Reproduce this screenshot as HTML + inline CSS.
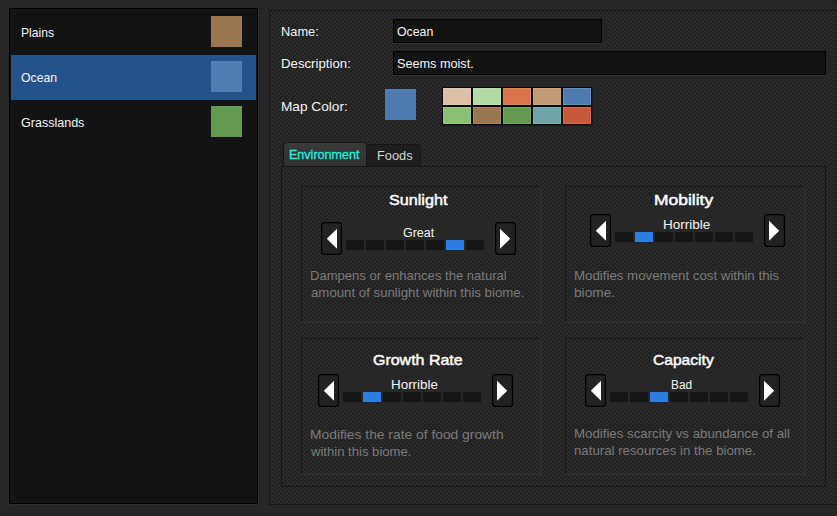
<!DOCTYPE html>
<html>
<head>
<meta charset="utf-8">
<title>Biome Editor</title>
<style>
html,body{margin:0;padding:0;}
html{background:#242424;overflow:hidden;}
body{width:837px;height:516px;overflow:hidden;position:relative;background:#242424;font-family:"Liberation Sans",sans-serif;font-size:13.33px;color:#f4f4f4;}
#bg{position:absolute;left:0;top:0;width:837px;height:516px;}
.abs{position:absolute;}
.t{position:absolute;white-space:nowrap;line-height:16px;height:16px;transform-origin:0 50%;}
.t12{font-size:12px;}
.h{position:absolute;white-space:nowrap;font-weight:normal;-webkit-text-stroke:0.5px #fafafa;font-size:15px;line-height:20px;height:20px;transform-origin:0 50%;color:#fafafa;}
.d{position:absolute;white-space:nowrap;line-height:16px;height:16px;transform-origin:0 50%;color:#7a7a7a;}
/* left list */
#list{left:9px;top:8px;width:247px;height:494px;border:1px solid #000;background:#131313;box-shadow:1px 1px 0 0 #2e2e2e;}
.row{position:absolute;left:11px;width:245px;height:45px;}
.sw{position:absolute;left:211px;width:31px;height:31px;}
/* right panel */
#panel{left:269px;top:10px;width:600px;height:493px;border:1px solid #151515;}
.inp{position:absolute;height:22px;border:1px solid #000;background:#131313;box-shadow:0 1px 0 0 #303030;}
#pal{left:442px;top:87px;width:150px;height:38px;background:#0b0b0a;border-right:1px solid #1b1b1b;border-bottom:1px solid #1b1b1b;}
.c{position:absolute;width:28px;height:17px;box-shadow:inset 0 0 0 1px rgba(255,255,255,0.13);}
/* tabs */
#tab1{left:283px;top:142px;width:82px;height:23px;border:1px solid #151515;border-bottom:none;border-radius:5px 5px 0 0;background:linear-gradient(#3a3a3a,#2f2f2f);}
#tab2{left:366px;top:144px;width:53px;height:21px;border:1px solid #151515;border-bottom:none;border-radius:5px 5px 0 0;background:#1d1d1d;}
#tabc{left:281px;top:166px;width:543px;height:319px;border:1px solid #151515;}
.g{position:absolute;width:238px;height:135px;border:1px solid;border-color:#171717 #303030 #303030 #171717;}
.bar{position:absolute;width:149px;height:35px;background:#272727;}
.s{position:absolute;top:19px;width:18px;height:10px;background:#161616;}
.s.on{background:#2e7de0;}
.btn{position:absolute;width:21px;height:33px;}
</style>
</head>
<body>
<svg id="bg" width="837" height="516" shape-rendering="crispEdges">
<defs>
<pattern id="tx" x="0" y="0" width="4" height="4" patternUnits="userSpaceOnUse">
<g id="txg">
<rect x="0" y="0" width="4" height="4" fill="#242424"/>
<rect x="1" y="1" width="2" height="1" fill="#2f2f2f"/>
<rect x="3" y="1" width="1" height="1" fill="#202020"/>
<rect x="0" y="1" width="1" height="1" fill="#202020"/>
<rect x="1" y="3" width="2" height="1" fill="#202020"/>
<rect x="3" y="3" width="1" height="1" fill="#2f2f2f"/>
<rect x="0" y="3" width="1" height="1" fill="#2f2f2f"/>
</g>
</pattern>
<pattern id="tx2" x="1" y="0" width="4" height="4" patternUnits="userSpaceOnUse"><rect x="0" y="0" width="4" height="4" fill="#242424"/><rect x="1" y="1" width="2" height="1" fill="#2f2f2f"/><rect x="3" y="1" width="1" height="1" fill="#202020"/><rect x="0" y="1" width="1" height="1" fill="#202020"/><rect x="1" y="3" width="2" height="1" fill="#202020"/><rect x="3" y="3" width="1" height="1" fill="#2f2f2f"/><rect x="0" y="3" width="1" height="1" fill="#2f2f2f"/></pattern>
</defs>
<rect x="0" y="0" width="837" height="516" fill="url(#tx)"/>
<rect x="270" y="11" width="567" height="493" fill="url(#tx2)"/>
</svg>

<!-- left list -->
<div id="list" class="abs"></div>
<div class="row" style="top:55px;background:#24538c;"></div>
<div class="sw" style="top:16px;background:#9b7650;"></div>
<div class="sw" style="top:61px;background:#527fb3;"></div>
<div class="sw" style="top:106px;background:#629a50;"></div>
<span class="t" id="l1" style="left:21.1px;top:25px;transform:scaleX(0.91);">Plains</span>
<span class="t" id="l2" style="left:21.2px;top:70px;transform:scaleX(0.918);">Ocean</span>
<span class="t" id="l3" style="left:21.2px;top:115px;transform:scaleX(0.94);">Grasslands</span>

<!-- right panel -->
<div id="panel" class="abs"></div>
<span class="t" id="n1" style="left:281.1px;top:24px;transform:scaleX(0.962);">Name:</span>
<span class="t" id="n2" style="left:281.1px;top:56px;transform:scaleX(0.992);">Description:</span>
<span class="t" id="n3" style="left:281.4px;top:99px;transform:scaleX(1.024);">Map Color:</span>
<div class="inp" style="left:393px;top:19px;width:207px;"></div>
<div class="inp" style="left:393px;top:51px;width:431px;"></div>
<span class="t" id="i1" style="left:397.3px;top:24px;transform:scaleX(0.923);">Ocean</span>
<span class="t" id="i2" style="left:396.5px;top:56px;transform:scaleX(0.95);">Seems moist.</span>
<div class="abs" style="left:385px;top:89px;width:31px;height:31px;background:#4f7cb0;"></div>
<div id="pal" class="abs">
<div class="c" style="left:1px;top:1px;background:#dcc0a5;"></div>
<div class="c" style="left:31px;top:1px;background:#b3daa6;"></div>
<div class="c" style="left:61px;top:1px;background:#d9744a;"></div>
<div class="c" style="left:91px;top:1px;background:#c49a75;"></div>
<div class="c" style="left:121px;top:1px;background:#4f7cb0;"></div>
<div class="c" style="left:1px;top:20px;background:#8ac074;"></div>
<div class="c" style="left:31px;top:20px;background:#9b7650;"></div>
<div class="c" style="left:61px;top:20px;background:#629a50;"></div>
<div class="c" style="left:91px;top:20px;background:#6fa5a8;"></div>
<div class="c" style="left:121px;top:20px;background:#c9583b;"></div>
</div>

<!-- tabs -->
<div id="tabc" class="abs"></div>
<div id="tab1" class="abs"></div>
<div id="tab2" class="abs"></div>
<span class="t" id="tb1" style="left:289.3px;top:147px;color:#1ff0e0;-webkit-text-stroke:0.3px #1ff0e0;transform:scaleX(0.941);">Environment</span>
<span class="t" id="tb2" style="left:376.5px;top:148px;color:#d6d6d6;transform:scaleX(0.959);">Foods</span>

<!-- groups -->
<div class="g" style="left:301px;top:186px;"></div>
<div class="g" style="left:565px;top:186px;"></div>
<div class="g" style="left:301px;top:338px;"></div>
<div class="g" style="left:565px;top:338px;"></div>

<!-- Sunlight -->
<span class="h" id="h1" style="left:389.1px;top:190px;transform:scaleX(1.078);">Sunlight</span>
<div class="bar" style="left:342px;top:221px;">
<div class="s" style="left:4px"></div><div class="s" style="left:24px"></div><div class="s" style="left:44px"></div><div class="s" style="left:64px"></div><div class="s" style="left:84px"></div><div class="s on" style="left:104px"></div><div class="s" style="left:124px"></div>
</div>
<span class="t t12" id="v1" style="left:402.9px;top:225px;transform:scaleX(1.037);">Great</span>
<svg class="btn" style="left:321px;top:222px;" width="21" height="33"><rect x="0.6" y="0.6" width="19.8" height="31.8" rx="2.6" fill="#222222" stroke="#020202" stroke-width="1.2"/><path d="M5.8 16.8 L16 6.8 L16 26.8 Z" fill="#fff"/></svg>
<svg class="btn" style="left:495px;top:222px;" width="21" height="33"><rect x="0.6" y="0.6" width="19.8" height="31.8" rx="2.6" fill="#222222" stroke="#020202" stroke-width="1.2"/><path d="M15.2 16.8 L5 6.8 L5 26.8 Z" fill="#fff"/></svg>
<span class="d" id="d1a" style="left:309.6px;top:268px;transform:scaleX(0.98);">Dampens or enhances the natural</span>
<span class="d" id="d1b" style="left:310.6px;top:285px;transform:scaleX(0.993);">amount of sunlight within this biome.</span>

<!-- Mobility -->
<span class="h" id="h2" style="left:654.2px;top:190px;transform:scaleX(1.163);">Mobility</span>
<div class="bar" style="left:611px;top:213px;">
<div class="s" style="left:4px"></div><div class="s on" style="left:24px"></div><div class="s" style="left:44px"></div><div class="s" style="left:64px"></div><div class="s" style="left:84px"></div><div class="s" style="left:104px"></div><div class="s" style="left:124px"></div>
</div>
<span class="t t12" id="v2" style="left:662.7px;top:217px;transform:scaleX(1.127);">Horrible</span>
<svg class="btn" style="left:590px;top:214px;" width="21" height="33"><rect x="0.6" y="0.6" width="19.8" height="31.8" rx="2.6" fill="#222222" stroke="#020202" stroke-width="1.2"/><path d="M5.8 16.8 L16 6.8 L16 26.8 Z" fill="#fff"/></svg>
<svg class="btn" style="left:764px;top:214px;" width="21" height="33"><rect x="0.6" y="0.6" width="19.8" height="31.8" rx="2.6" fill="#222222" stroke="#020202" stroke-width="1.2"/><path d="M15.2 16.8 L5 6.8 L5 26.8 Z" fill="#fff"/></svg>
<span class="d" id="d2a" style="left:574.3px;top:268px;transform:scaleX(0.996);">Modifies movement cost within this</span>
<span class="d" id="d2b" style="left:574px;top:285px;transform:scaleX(1.028);">biome.</span>

<!-- Growth Rate -->
<span class="h" id="h3" style="left:372.8px;top:350px;transform:scaleX(1.064);">Growth Rate</span>
<div class="bar" style="left:339px;top:373px;">
<div class="s" style="left:4px"></div><div class="s on" style="left:24px"></div><div class="s" style="left:44px"></div><div class="s" style="left:64px"></div><div class="s" style="left:84px"></div><div class="s" style="left:104px"></div><div class="s" style="left:124px"></div>
</div>
<span class="t t12" id="v3" style="left:391.4px;top:377px;transform:scaleX(1.117);">Horrible</span>
<svg class="btn" style="left:318px;top:374px;" width="21" height="33"><rect x="0.6" y="0.6" width="19.8" height="31.8" rx="2.6" fill="#222222" stroke="#020202" stroke-width="1.2"/><path d="M5.8 16.8 L16 6.8 L16 26.8 Z" fill="#fff"/></svg>
<svg class="btn" style="left:492px;top:374px;" width="21" height="33"><rect x="0.6" y="0.6" width="19.8" height="31.8" rx="2.6" fill="#222222" stroke="#020202" stroke-width="1.2"/><path d="M15.2 16.8 L5 6.8 L5 26.8 Z" fill="#fff"/></svg>
<span class="d" id="d3a" style="left:309.6px;top:427px;transform:scaleX(1.037);">Modifies the rate of food growth</span>
<span class="d" id="d3b" style="left:310.6px;top:444px;transform:scaleX(0.982);">within this biome.</span>

<!-- Capacity -->
<span class="h" id="h4" style="left:652.5px;top:350px;transform:scaleX(1.04);">Capacity</span>
<div class="bar" style="left:606px;top:373px;">
<div class="s" style="left:4px"></div><div class="s" style="left:24px"></div><div class="s on" style="left:44px"></div><div class="s" style="left:64px"></div><div class="s" style="left:84px"></div><div class="s" style="left:104px"></div><div class="s" style="left:124px"></div>
</div>
<span class="t t12" id="v4" style="left:671.2px;top:377px;transform:scaleX(0.988);">Bad</span>
<svg class="btn" style="left:585px;top:374px;" width="21" height="33"><rect x="0.6" y="0.6" width="19.8" height="31.8" rx="2.6" fill="#222222" stroke="#020202" stroke-width="1.2"/><path d="M5.8 16.8 L16 6.8 L16 26.8 Z" fill="#fff"/></svg>
<svg class="btn" style="left:759px;top:374px;" width="21" height="33"><rect x="0.6" y="0.6" width="19.8" height="31.8" rx="2.6" fill="#222222" stroke="#020202" stroke-width="1.2"/><path d="M15.2 16.8 L5 6.8 L5 26.8 Z" fill="#fff"/></svg>
<span class="d" id="d4a" style="left:573.6px;top:426px;transform:scaleX(0.995);">Modifies scarcity vs abundance of all</span>
<span class="d" id="d4b" style="left:573.6px;top:443px;transform:scaleX(0.994);">natural resources in the biome.</span>

</body>
</html>
